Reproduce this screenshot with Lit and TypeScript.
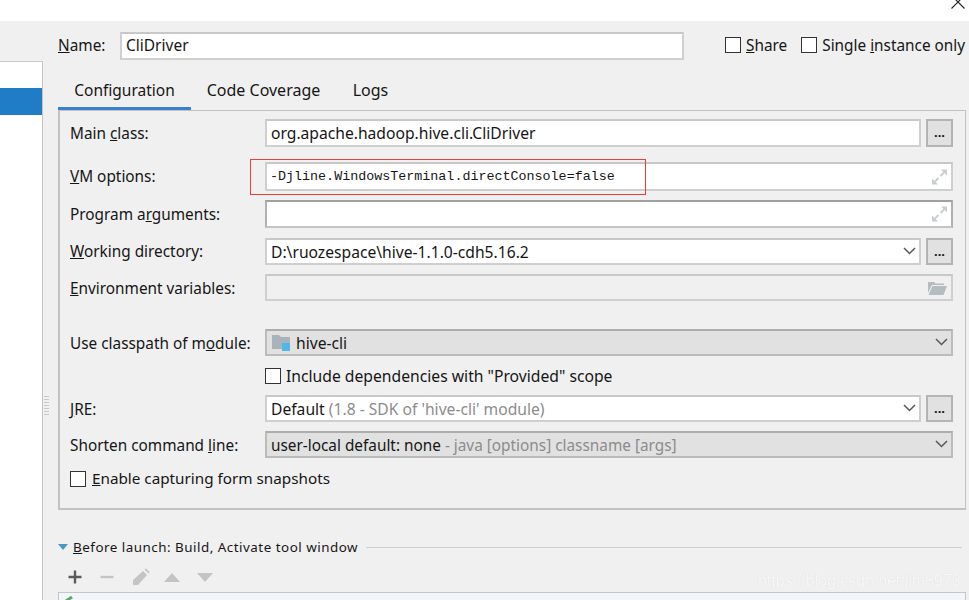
import { LitElement, html, css } from "lit";
import { customElement } from "lit/decorators.js";

const expand = html`<svg class="ico expand" width="17" height="17" viewBox="0 0 17 17"><path d="M10 1h6v6zM7 16H1v-6z" fill="#c7cdd0"/><path d="M13 4 9.500 7.500M4 13l3.500-3.500" stroke="#c7cdd0" stroke-width="1.800" fill="none"/></svg>`;
const chevron = html`<svg class="ico chev" width="13" height="9" viewBox="0 0 13 9"><path d="M1 1.500 6.500 7 12 1.500" fill="none" stroke="#595959" stroke-width="1.500"/></svg>`;
const dots = html`<div class="dots">...</div>`;

@customElement("app-root")
export class AppRoot extends LitElement {
  static styles = css`
    :host { display: block; width: 969px; height: 600px; position: relative; overflow: hidden; background: #f0f0f0; color: #161616; font-family: "Noto Sans", "Open Sans", sans-serif; font-size: 15.35px; line-height: 20px; }
    .top { height: 21px; background: #fff; }
    .close { position: absolute; right: 3px; top: -6px; }
    .body { display: flex; height: 579px; }
    .side { width: 43px; flex: none; padding-top: 40px; box-sizing: border-box; display: flex; }
    .side-list { flex: 1; background: #fff; border-top: 1px solid #c8c8c8; border-right: 1px solid #c4c4c4; padding-top: 26px; }
    .sel { height: 27px; background: #1f7cc7; }
    .splitter { position: absolute; left: 44px; top: 395px; width: 5px; height: 20px; background-image: radial-gradient(circle, #c4c4c4 0.8px, transparent 1px); background-size: 2.5px 3px; }
    .main { flex: 1; min-width: 0; padding: 11px 3px 0 15px; }
    .name-row { display: flex; align-items: center; height: 28px; }
    .name-label { width: 62px; flex: none; padding-bottom: 2px; }
    .field { box-sizing: border-box; background: #fff; border: 2px solid #cfcfcf; border-top-color: #c8c8c8; display: flex; align-items: center; padding-left: 4px; white-space: nowrap; position: relative; font-size: 15.65px; }
    .name-input { width: 564px; height: 28px; flex: none; font-size: 15.5px; padding-bottom: 2px; }
    .check { display: inline-flex; align-items: center; gap: 5px; white-space: nowrap; }
    .box { width: 14px; height: 14px; border: 1px solid #333; background: #fff; display: block; flex: none; }
    .share { margin-left: 41px; padding-bottom: 2px; }
    .single { margin-left: 14px; padding-bottom: 2px; }
    .tabs { display: flex; height: 39px; margin-top: 11px; }
    .tab { display: flex; align-items: center; justify-content: center; padding-bottom: 1px; box-sizing: border-box; height: 39px; font-size: 16px; }
    .tab.a { width: 133px; border-bottom: 3px solid #3a80cf; padding: 2px 0 0; font-size: 15.5px; }
    .tab.b { width: 145px; }
    .tab.c { width: 69px; }
    .panel { box-sizing: border-box; height: 400px; border: 2px solid #c2c2c2; border-top: 1px solid #c2c2c2; border-right-width: 1px; padding: 8px 12px 0 10px; }
    .row { display: flex; align-items: center; height: 27px; }
    .row.h28 { height: 28px; } .row.h29 { height: 29px; }
    .label { width: 195px; flex: none; white-space: nowrap; }
    .label.up { padding-bottom: 1px; }
    .grow { flex: 1; min-width: 0; height: 100%; }
    .shrink { width: 656px; flex: none; height: 100%; }
    .dots { box-sizing: border-box; width: 27px; height: 100%; flex: none; margin-left: 5px; background: #e1e1e1; border: 2px solid #b4b4b4; text-align: center; font-weight: 700; font-size: 13px; line-height: 22px; }
    .mono { font-family: "Liberation Mono", monospace; font-size: 13.36px; padding-left: 3px; }
    .ico { position: absolute; top: 50%; transform: translateY(-50%); right: 3px; }
    .chev { margin-top: -1px; }
    .folder { right: 4px; }
    .disabled { background: #f0f0f0; }
    .combo { background: #e1e1e1; border-color: #bbb; border-top-color: #adadad; }
    .sum { font-size: 15.35px; }
    .muted { color: #8c8c8c; }
    .dark { border-color: #c4c4c4; border-top-color: #a0a0a0; border-left-color: #b0b0b0; border-right-color: #b0b0b0; }
    .m15 { margin-top: 15px; } .m9 { margin-top: 9px; } .m10 { margin-top: 10px; } .m28 { margin-top: 28px; }
    .m11 { margin-top: 11px; } .m12 { margin-top: 12px; } .m13 { margin-top: 13px; }
    .indent { padding-left: 195px; height: 16px; }
    .wide { font-size: 15.7px; }
    .snap { height: 16px; }
    .snap .check { gap: 6px; padding-bottom: 1px; }
    .snap .txt { position: relative; top: -1px; font-size: 15.25px; }
    .mod { display: inline-flex; margin: 0 5px 0 1px; }
    .launch { display: flex; align-items: center; height: 20px; margin-top: 27px; font-size: 13.4px; letter-spacing: 0.5px; }
    .tri { width: 0; height: 0; border-left: 5px solid transparent; border-right: 5px solid transparent; border-top: 6px solid #4a97c6; margin-right: 5px; flex: none; }
    .line { flex: 1; height: 1px; background: #cdcdcd; margin: 0 4px 0 8px; }
    .tools { display: flex; align-items: center; height: 20px; margin-top: 10px; padding-left: 9px; }
    .t2 { margin-left: 16px; } .t3 { margin-left: 17px; } .t4 { margin-left: 14px; } .t5 { margin-left: 17px; }
    .list { box-sizing: border-box; height: 20px; margin-top: 5px; background: #f2f5f9; border: 1px solid #c6c6c6; padding: 3px 0 0 4px; display: flex; align-items: flex-start; gap: 9px; overflow: hidden; }
    .tick { flex: none; }
    .mark { position: absolute; left: 758px; top: 571px; font-family: "Liberation Sans", sans-serif; font-size: 15.9px; color: #f8f8f8; text-shadow: 0 0 1px #d8d8d8; white-space: nowrap; }
    .red { position: absolute; left: 250px; top: 159px; width: 396px; height: 36px; box-sizing: border-box; border: 1px solid #ee3b3b; pointer-events: none; }
  `;

  render() {
    return html`
      <div class="top"></div>
      <svg class="close" width="16" height="16" viewBox="0 0 16 16"><path d="M1.500 1.500 14.500 14.500M14.500 1.500 1.500 14.500" stroke="#222" stroke-width="1.100" fill="none"/></svg>
      <div class="body">
        <div class="side"><div class="side-list"><div class="sel"></div></div></div>
        <div class="main">
          <div class="name-row">
            <div class="name-label"><u>N</u>ame:</div>
            <div class="field name-input">CliDriver</div>
            <label class="check share"><span class="box"></span><span><u>S</u>hare</span></label>
            <label class="check single"><span class="box"></span><span>Single <u>i</u>nstance only</span></label>
          </div>
          <div class="tabs">
            <div class="tab a">Configuration</div>
            <div class="tab b">Code Coverage</div>
            <div class="tab c">Logs</div>
          </div>
          <div class="panel">
            <div class="row h28"><div class="label">Main <u>c</u>lass:</div><div class="field shrink">org.apache.hadoop.hive.cli.CliDriver</div>${dots}</div>
            <div class="row h29 m15"><div class="label up"><u>V</u>M options:</div><div class="field grow mono">-Djline.WindowsTerminal.directConsole=false${expand}</div></div>
            <div class="row h28 m9"><div class="label">Program a<u>r</u>guments:</div><div class="field grow dark">${expand}</div></div>
            <div class="row m10"><div class="label up"><u>W</u>orking directory:</div><div class="field shrink">D:\\ruozespace\\hive-1.1.0-cdh5.16.2${chevron}</div>${dots}</div>
            <div class="row m9"><div class="label"><u>E</u>nvironment variables:</div><div class="field grow disabled">
              <svg class="ico folder" width="20" height="16" viewBox="0 0 20 16"><path d="M1 2h6l1.500 1.500H17V5H5L1 13z" fill="#b5bcc0"/><path d="M5.500 6H20l-3.500 9H1.500z" fill="#b5bcc0"/></svg>
            </div></div>
            <div class="row m28"><div class="label">Use classpath of m<u>o</u>dule:</div><div class="field grow combo">
              <span class="mod"><svg width="19" height="18" viewBox="0 0 19 18"><path d="M0 1h7l2 2h9v12H0z" fill="#a9b3bb"/><rect x="10" y="9" width="8" height="8" fill="#4fb8e6"/></svg></span>hive-cli${chevron}</div></div>
            <div class="row indent m12"><label class="check"><span class="box"></span><span class="wide">Include dependencies with "Provided" scope</span></label></div>
            <div class="row m11"><div class="label"><u>J</u>RE:</div><div class="field shrink">Default&nbsp;<span class="muted">(1.8 - SDK of 'hive-cli' module)</span>${chevron}</div>${dots}</div>
            <div class="row m9"><div class="label">Shorten command <u>l</u>ine:</div><div class="field grow combo sum">user-local default: none&nbsp;<span class="muted">- java [options] classname [args]</span>${chevron}</div></div>
            <div class="row snap m13"><label class="check"><span class="box"></span><span class="txt"><u>E</u>nable capturing form snapshots</span></label></div>
          </div>
          <div class="launch"><span class="tri"></span><span><u>B</u>efore launch: Build, Activate tool window</span><span class="line"></span></div>
          <div class="tools">
            <svg width="16" height="16" viewBox="0 0 16 16"><path d="M8 1.500v13M1.500 8h13" stroke="#5a5a5a" stroke-width="2.400"/></svg>
            <svg class="t2" width="16" height="16" viewBox="0 0 16 16"><path d="M1.500 8h13" stroke="#c4c4c4" stroke-width="2.400"/></svg>
            <svg class="t3" width="18" height="18" viewBox="0 0 18 18"><path d="M1 17v-5L11 3l4 4L6 17zM12.500 1.500l1.500-1 3.500 3.500-1 1.500z" fill="#c4c4c4"/></svg>
            <svg class="t4" width="16" height="9" viewBox="0 0 16 9"><path d="M8 0l8 9H0z" fill="#c4c4c4"/></svg>
            <svg class="t5" width="16" height="9" viewBox="0 0 16 9"><path d="M8 9l8-9H0z" fill="#c4c4c4"/></svg>
          </div>
          <div class="list">
            <svg class="tick" width="12" height="8" viewBox="0 0 12 8"><path d="M0 7 9 1" fill="none" stroke="#59a869" stroke-width="3"/></svg>
            <span>Build</span>
          </div>
        </div>
      </div>
      <div class="splitter"></div>
      <div class="red"></div>
      <div class="mark">https://blog.csdn.net/jim8973</div>
    `;
  }
}
